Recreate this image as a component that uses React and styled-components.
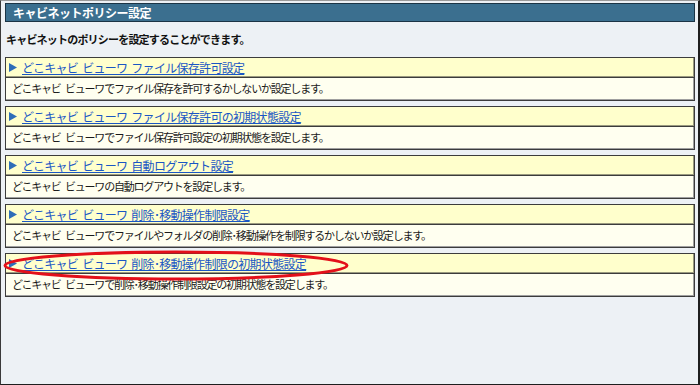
import React from 'react';
import styled, { createGlobalStyle } from 'styled-components';

const GlobalStyle = createGlobalStyle`
  html, body {
    margin: 0;
    padding: 0;
    background: #edf1f5;
  }
  body {
    font-family: "Noto Sans CJK JP", "Noto Sans", sans-serif;
  }
`;

const Frame = styled.div`
  box-sizing: border-box;
  width: 700px;
  height: 385px;
  background: #edf1f5;
  border-top: 1px solid #9a9a9a;
  border-left: 1px solid #3a3a3a;
  border-right: 2px solid #1e1e1e;
  border-bottom: 1px solid #1e1e1e;
  padding: 2px 3px 0 4px;
  position: relative;
`;

const TitleBar = styled.div`
  box-sizing: border-box;
  height: 19px;
  background: #3b6f8f;
  border: 1px solid #1b3445;
  color: #fff;
  font-weight: bold;
  font-size: 12px;
  letter-spacing: -0.5px;
  line-height: 17px;
  padding-left: 7px;
`;

const Lead = styled.p`
  margin: 0;
  height: 35px;
  font-size: 11px;
  font-weight: bold;
  letter-spacing: -0.8px;
  line-height: 35px;
  color: #111;
  padding-left: 1px;
`;

const List = styled.div`
  display: flex;
  flex-direction: column;
  gap: 5px;
`;

const Item = styled.div`
  display: flex;
  flex-direction: column;
`;

const Head = styled.div`
  box-sizing: border-box;
  height: 21px;
  background: #ffffcc;
  border: 1px solid #3c3c3c;
  box-shadow: inset -1px -1px 0 #9a9a80;
  display: flex;
  align-items: center;
  gap: 5px;
  padding-left: 3px;
`;

const Arrow = styled.svg`
  width: 8px;
  height: 9px;
  flex: none;
`;

const Link = styled.a`
  color: #1a56c4;
  text-decoration: underline;
  font-size: 12px;
  letter-spacing: -0.7px;
  word-spacing: 2px;
  line-height: 18px;
  cursor: pointer;
`;

const Desc = styled.div`
  box-sizing: border-box;
  height: 23px;
  background: #fffff0;
  border: 1px solid #3c3c3c;
  border-top: none;
  box-shadow: inset -1px -1px 0 #a0a0a0;
  font-size: 11px;
  letter-spacing: -1.2px;
  word-spacing: 3px;
  line-height: 21px;
  color: #1a1a1a;
  padding-left: 6px;
`;

const Mark = styled.svg`
  position: absolute;
  left: 1px;
  top: 249px;
  width: 348px;
  height: 31px;
  pointer-events: none;
`;

const items = [
  {
    title: 'どこキャビ ビューワ ファイル保存許可設定',
    desc: 'どこキャビ ビューワでファイル保存を許可するかしないか設定します。',
  },
  {
    title: 'どこキャビ ビューワ ファイル保存許可の初期状態設定',
    desc: 'どこキャビ ビューワでファイル保存許可設定の初期状態を設定します。',
  },
  {
    title: 'どこキャビ ビューワ 自動ログアウト設定',
    desc: 'どこキャビ ビューワの自動ログアウトを設定します。',
  },
  {
    title: 'どこキャビ ビューワ 削除･移動操作制限設定',
    desc: 'どこキャビ ビューワでファイルやフォルダの削除･移動操作を制限するかしないか設定します。',
  },
  {
    title: 'どこキャビ ビューワ 削除･移動操作制限の初期状態設定',
    desc: 'どこキャビ ビューワで削除･移動操作制限設定の初期状態を設定します。',
  },
];

const App = () => (
  <>
    <GlobalStyle />
    <Frame>
      <TitleBar>キャビネットポリシー設定</TitleBar>
      <Lead>キャビネットのポリシーを設定することができます。</Lead>
      <List>
        {items.map((it) => (
          <Item key={it.title}>
            <Head>
              <Arrow viewBox="0 0 8 9">
                <polygon points="0,0 8,4.5 0,9" fill="#2e6db8" />
              </Arrow>
              <Link>{it.title}</Link>
            </Head>
            <Desc>{it.desc}</Desc>
          </Item>
        ))}
      </List>
      <Mark viewBox="0 0 348 31">
        <ellipse cx="174" cy="15.5" rx="171" ry="13.5" fill="none" stroke="#e3101a" strokeWidth="3" />
      </Mark>
    </Frame>
  </>
);

export default App;
